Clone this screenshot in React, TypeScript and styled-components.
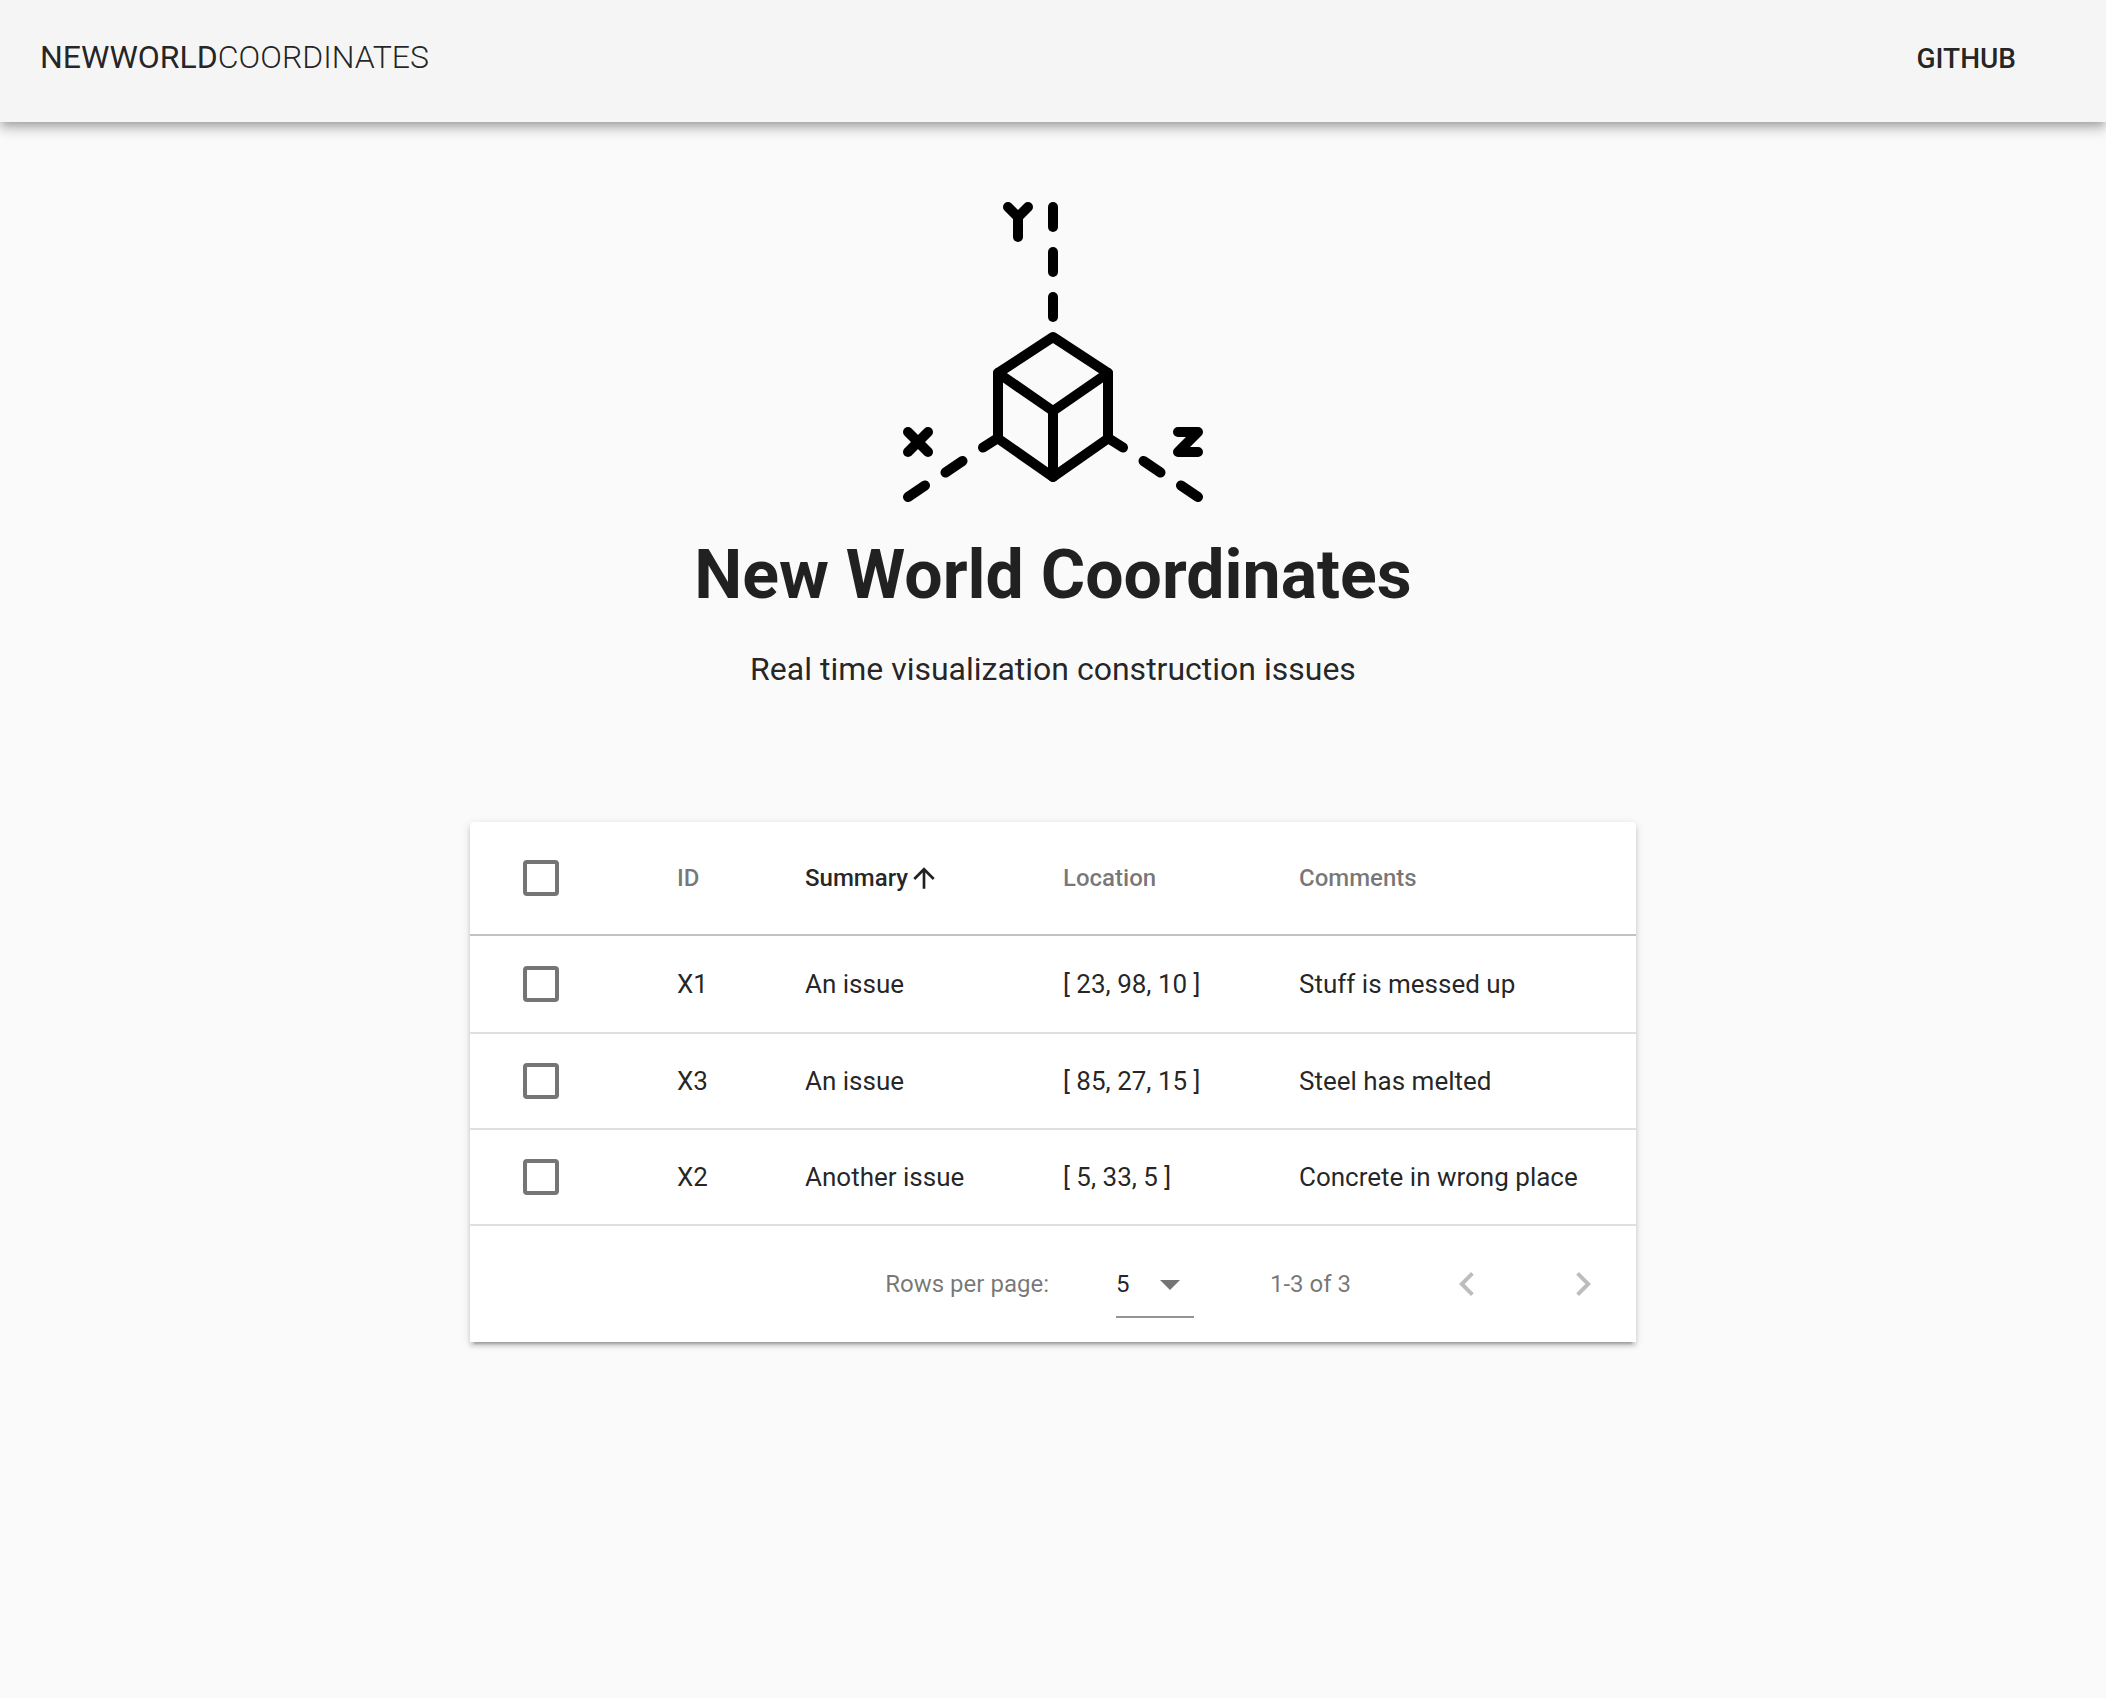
import React, { useState } from 'react';
import styled, { createGlobalStyle } from 'styled-components';

const ink = 'rgba(0, 0, 0, 0.87)';
const muted = 'rgba(0, 0, 0, 0.54)';
const line = 'rgba(0, 0, 0, 0.12)';

const GlobalStyle = createGlobalStyle`
  *, *::before, *::after { box-sizing: border-box; }
  body {
    margin: 0;
    background: #fafafa;
    color: ${ink};
    font-family: Roboto, sans-serif;
    font-size: 26px;
  }
`;

const Toolbar = styled.header`
  display: flex;
  align-items: baseline;
  justify-content: space-between;
  height: 122px;
  padding: 37px 90px 0 40px;
  background: #f5f5f5;
  box-shadow: 0 4px 8px -2px rgba(0, 0, 0, 0.2), 0 8px 10px rgba(0, 0, 0, 0.14),
    0 2px 20px rgba(0, 0, 0, 0.12);
`;

const Brand = styled.div`
  font-size: 32px;
  line-height: 40px;
  text-transform: uppercase;
`;

const BrandLight = styled.span`
  font-weight: 300;
`;

const NavLink = styled.a`
  color: inherit;
  font-size: 28px;
  font-weight: 500;
  line-height: 40px;
  text-decoration: none;
  text-transform: uppercase;
`;

const Page = styled.main`
  display: flex;
  flex-direction: column;
  align-items: center;
  padding: 80px 32px;
`;

const Logo = styled.svg`
  width: 300px;
  height: 300px;
  fill: none;
  stroke: #000;
  stroke-width: 2;
  stroke-linecap: round;
  stroke-linejoin: round;
`;

const Title = styled.h1`
  margin: 33px 0 34px;
  font-size: 68px;
  font-weight: 700;
  line-height: 80px;
  text-align: center;
`;

const Subtitle = styled.p`
  margin: 0 0 133px;
  font-size: 32px;
  line-height: 40px;
  text-align: center;
`;

const Card = styled.section`
  width: 100%;
  max-width: 1166px;
  background: #fff;
  border-radius: 4px 4px 0 0;
  box-shadow: 0 6px 2px -4px rgba(0, 0, 0, 0.2), 0 4px 4px rgba(0, 0, 0, 0.14),
    0 2px 10px rgba(0, 0, 0, 0.12);
`;

const Table = styled.table`
  width: 100%;
  table-layout: fixed;
  border-collapse: separate;
  border-spacing: 0;
`;

const Col = styled.col<{ $width?: number }>`
  width: ${(p) => (p.$width ? `${p.$width}px` : 'auto')};
`;

const HeadCell = styled.th<{ $active?: boolean }>`
  height: 114px;
  padding: 0 48px;
  border-bottom: 2px solid rgba(0, 0, 0, 0.24);
  color: ${(p) => (p.$active ? ink : muted)};
  font-size: 24px;
  font-weight: 500;
  line-height: 32px;
  text-align: left;
  white-space: nowrap;
`;

const SortButton = styled.button`
  display: inline-flex;
  align-items: center;
  padding: 0;
  border: 0;
  background: none;
  color: inherit;
  font: inherit;
  cursor: pointer;
`;

const Cell = styled.td`
  height: 96px;
  padding: 0 48px;
  border-bottom: 2px solid ${line};
  line-height: 32px;
  white-space: nowrap;

  tr:first-child > & { height: 98px; }
`;

const Checkbox = styled.input`
  display: block;
  width: 36px;
  height: 36px;
  margin: 0 5px;
  appearance: none;
  border: 4px solid #757575;
  border-radius: 4px;
  cursor: pointer;

  &:checked { background: #757575; }
`;

const Footer = styled.footer`
  display: flex;
  align-items: center;
  justify-content: flex-end;
  height: 116px;
  padding-right: 29px;
  color: ${muted};
  font-size: 24px;
  line-height: 32px;
`;

const SelectBox = styled.div`
  display: grid;
  align-items: center;
  justify-items: end;
  width: 78px;
  margin: 0 76px 0 67px;

  > * { grid-area: 1 / 1; }
  > svg { pointer-events: none; }
`;

const Select = styled.select`
  width: 100%;
  height: 68px;
  padding: 0;
  appearance: none;
  border: 0 solid transparent;
  border-width: 2px 0;
  border-bottom-color: rgba(0, 0, 0, 0.42);
  border-radius: 0;
  background: none;
  color: ${ink};
  font: inherit;
`;

const Range = styled.span`
  margin-right: 92px;
`;

const PagerGroup = styled.div`
  display: flex;
  gap: 68px;
`;

const PageButton = styled.button`
  display: flex;
  padding: 0;
  border: 0;
  background: none;
  color: rgba(0, 0, 0, 0.26);
`;

const Icon = ({ d, size = 48 }: { d: string; size?: number }) => (
  <svg width={size} height={size} viewBox="0 0 24 24" fill="currentColor" aria-hidden="true">
    <path d={d} />
  </svg>
);

const DropArrow = () => (
  <svg width={48} height={48} viewBox="0 0 24 24" fill="#757575" aria-hidden="true">
    <path d="M7 10l5 5 5-5z" />
  </svg>
);

const AxesLogo = () => (
  <Logo viewBox="0 0 60 60" role="img" aria-label="Coordinate axes">
    <line x1="30" y1="1" x2="30" y2="5" />
    <line x1="30" y1="10" x2="30" y2="14" />
    <line x1="30" y1="19" x2="30" y2="23" />
    <polyline points="21,1 23,3 25,1" />
    <line x1="23" y1="3" x2="23" y2="7" />
    <path d="M30 27 L41 34.2 V47.3 L30 55 L19 47.3 V34.2 Z" />
    <path d="M19 34.2 L30 41.8 L41 34.2 M30 41.8 V55" />
    <path d="M19 47.2 L16 49.1 M11.9 51.8 L8.5 54.1 M4.4 56.7 L1 59" />
    <path d="M41 47.2 L44 49.1 M48.1 51.8 L51.5 54.1 M55.6 56.7 L59 59" />
    <line x1="1" y1="46" x2="5" y2="50" />
    <line x1="5" y1="46" x2="1" y2="50" />
    <polyline points="55,46 59,46 55,50 59,50" />
  </Logo>
);

const issues = [
  { id: 'X1', summary: 'An issue', location: [23, 98, 10], comments: 'Stuff is messed up' },
  { id: 'X3', summary: 'An issue', location: [85, 27, 15], comments: 'Steel has melted' },
  { id: 'X2', summary: 'Another issue', location: [5, 33, 5], comments: 'Concrete in wrong place' },
];

export default function App() {
  const [selected, setSelected] = useState<string[]>([]);
  const allSelected = selected.length === issues.length;

  const toggle = (id: string) =>
    setSelected((ids) => (ids.includes(id) ? ids.filter((x) => x !== id) : [...ids, id]));

  return (
    <>
      <GlobalStyle />
      <Toolbar>
        <Brand>
          NewWorld<BrandLight>Coordinates</BrandLight>
        </Brand>
        <NavLink href="#github">GitHub</NavLink>
      </Toolbar>
      <Page>
        <AxesLogo />
        <Title>New World Coordinates</Title>
        <Subtitle>Real time visualization construction issues</Subtitle>
        <Card>
          <Table>
            <colgroup>
              <Col $width={159} />
              <Col $width={128} />
              <Col $width={258} />
              <Col $width={236} />
              <Col />
            </colgroup>
            <thead>
              <tr>
                <HeadCell>
                  <Checkbox
                    type="checkbox"
                    aria-label="Select all issues"
                    checked={allSelected}
                    onChange={() => setSelected(allSelected ? [] : issues.map((i) => i.id))}
                  />
                </HeadCell>
                <HeadCell>ID</HeadCell>
                <HeadCell $active aria-sort="ascending">
                  <SortButton type="button">
                    Summary
                    <Icon
                      size={32}
                      d="M4 12l1.41 1.41L11 7.83V20h2V7.83l5.58 5.59L20 12l-8-8-8 8z"
                    />
                  </SortButton>
                </HeadCell>
                <HeadCell>Location</HeadCell>
                <HeadCell>Comments</HeadCell>
              </tr>
            </thead>
            <tbody>
              {issues.map((issue) => (
                <tr key={issue.id}>
                  <Cell>
                    <Checkbox
                      type="checkbox"
                      aria-label={`Select ${issue.id}`}
                      checked={selected.includes(issue.id)}
                      onChange={() => toggle(issue.id)}
                    />
                  </Cell>
                  <Cell>{issue.id}</Cell>
                  <Cell>{issue.summary}</Cell>
                  <Cell>{`[ ${issue.location.join(', ')} ]`}</Cell>
                  <Cell>{issue.comments}</Cell>
                </tr>
              ))}
            </tbody>
          </Table>
          <Footer>
            <label htmlFor="rows-per-page">Rows per page:</label>
            <SelectBox>
              <Select id="rows-per-page" defaultValue="5">
                <option value="5">5</option>
                <option value="10">10</option>
                <option value="25">25</option>
              </Select>
              <DropArrow />
            </SelectBox>
            <Range>1-3 of 3</Range>
            <PagerGroup>
              <PageButton type="button" disabled aria-label="Previous page">
                <Icon d="M15.41 7.41L14 6l-6 6 6 6 1.41-1.41L10.83 12z" />
              </PageButton>
              <PageButton type="button" disabled aria-label="Next page">
                <Icon d="M8.59 16.59L10 18l6-6-6-6-1.41 1.41L13.17 12z" />
              </PageButton>
            </PagerGroup>
          </Footer>
        </Card>
      </Page>
    </>
  );
}
